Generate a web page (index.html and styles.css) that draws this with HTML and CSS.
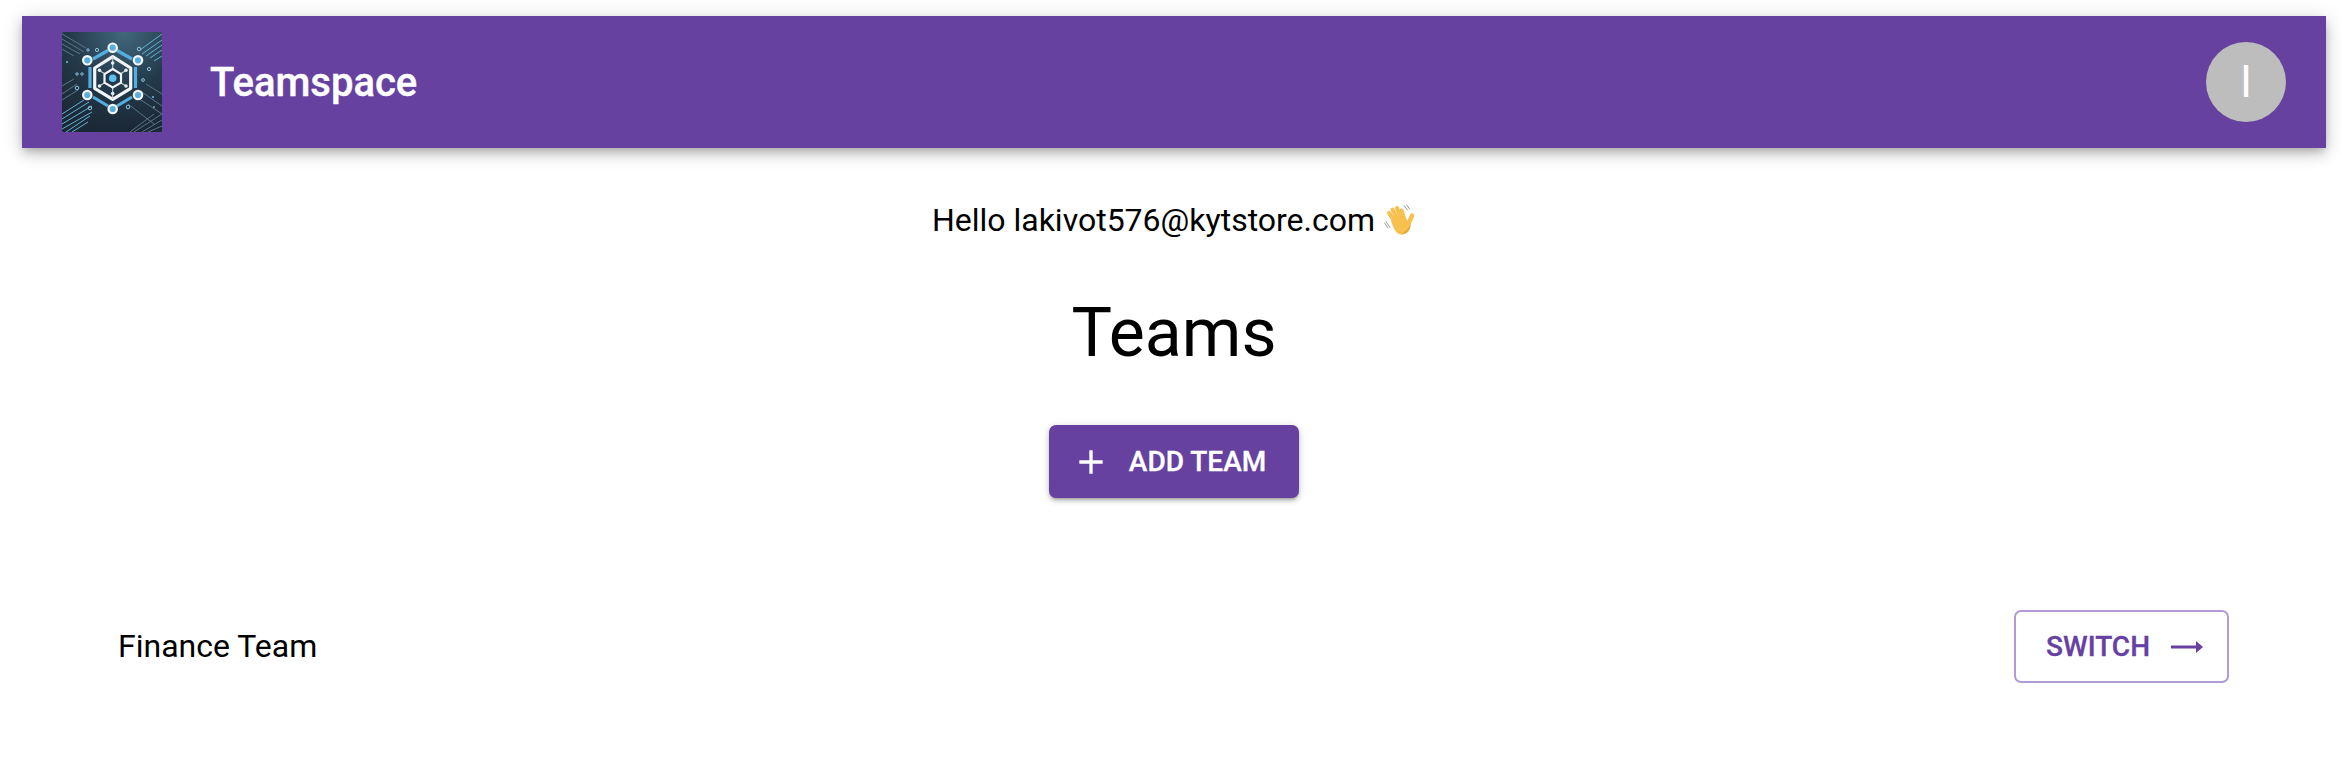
FILE: index.html
```html
<!DOCTYPE html>
<html lang="en">
<head>
<meta charset="utf-8">
<title>Teamspace</title>
<link rel="stylesheet" href="styles.css">
</head>
<body>
<div class="page">
  <header class="appbar">
    <svg class="logo" viewBox="0 0 100 100" aria-hidden="true">
      <defs>
        <radialGradient id="bg" cx="0.62" cy="0" r="1">
          <stop offset="0" stop-color="#42687c"/>
          <stop offset="0.55" stop-color="#23394a"/>
          <stop offset="1" stop-color="#1b2836"/>
        </radialGradient>
      </defs>
      <rect width="100" height="100" rx="1.5" fill="url(#bg)"/>
      <g fill="none" stroke="#587688" stroke-width="1">
        <path d="M0 2 24 16M0 7 22 20M0 12 18 22M0 17 12 24M68 100 92 82M72 100 100 82M80 100 100 88M86 100 100 94M66 72 92 92M76 66 100 82M80 60 100 74M84 52 100 62M0 54 12 47M0 62 15 52M0 68 16 58"/>
      </g>
      <g fill="none" stroke="#62b3d8" stroke-width="1">
        <path d="M78 18 100 2M80 22 100 8M84 24 100 13M88 26 100 18M92 29 100 24M0 82 22 68M0 87 27 70M0 92 30 74M0 97 30 80M4 100 28 84M10 100 26 90"/>
      </g>
      <g fill="none" stroke="#8fc4dc" stroke-width="1">
        <circle cx="26" cy="18" r="1.2"/><circle cx="35" cy="18" r="1.6"/><circle cx="77" cy="17" r="1.8"/><circle cx="87" cy="37" r="1.6"/><circle cx="15" cy="42" r="1.2"/><circle cx="20" cy="42" r="1.2"/><circle cx="15" cy="56" r="1.8"/><circle cx="81" cy="48" r="1.4"/><circle cx="28" cy="76" r="1.8"/><circle cx="66" cy="75" r="1.8"/>
      </g>
      <g fill="#6fb6d6">
        <circle cx="5" cy="30" r="1.1"/><circle cx="91" cy="65" r="1.1"/><circle cx="92" cy="75" r="0.9"/>
      </g>
      <path d="M31 27 46 18.500M55 18.500 70 27M28 35V56M73.500 35V56M31 65 46 74M55 74 70 65" fill="none" stroke="#55aee0" stroke-width="3.200"/>
      <path d="M50.700 24.700 68.700 36 68.700 56.300 50.700 67.300 32.700 56.300 32.700 36Z" fill="none" stroke="#f2f5f7" stroke-width="3.200" stroke-linejoin="round"/>
      <path d="M50.700 24.700V38M50.700 54.500V67.300M37 38.500 43.500 42M64 38.500 58 42M37 54 43.500 50.500M64 54 58 50.500" stroke="#c8d4da" stroke-width="1.100" fill="none"/>
      <path d="M50.700 37 59 42 59 50.700 50.700 55.500 42.500 50.700 42.500 42Z" fill="#22384a" stroke="#f2f5f7" stroke-width="2.200"/>
      <circle cx="50.700" cy="46.300" r="3.800" fill="#5cc0ec"/>
      <g fill="#e4ebee">
        <circle cx="50.700" cy="31" r="1.800"/><circle cx="37.500" cy="38.300" r="1.800"/><circle cx="64" cy="38.300" r="1.800"/><circle cx="37.500" cy="54" r="1.800"/><circle cx="64" cy="54" r="1.800"/><circle cx="50.700" cy="61.500" r="1.800"/>
      </g>
      <g fill="#5aaedb" stroke="#f4f7f8" stroke-width="2.200">
        <circle cx="50.700" cy="15.700" r="4.200"/><circle cx="25.300" cy="28.300" r="4.200"/><circle cx="76" cy="28.300" r="4.200"/><circle cx="25.300" cy="63" r="4.200"/><circle cx="76" cy="63" r="4.200"/><circle cx="50.700" cy="77" r="4.200"/>
      </g>
    </svg>
    <div class="brand">Teamspace</div>
    <div class="avatar">I</div>
  </header>

  <main class="hero">
    <p class="greeting">Hello lakivot576@kytstore.com
      <svg class="wave" viewBox="0 0 32 32" aria-hidden="true">
        <g fill="none" stroke="#f7c04f" stroke-linecap="round">
          <path d="M10.500 17 5 9" stroke-width="4"/>
          <path d="M13 14.500 8.500 5.500" stroke-width="4"/>
          <path d="M16.500 13.500 13 4" stroke-width="4"/>
          <path d="M20 14 17.500 6.500" stroke-width="4"/>
          <path d="M24.500 20 28 11.500" stroke-width="4.500"/>
        </g>
        <path d="M7 17C10 12 19 10 21.500 14L26.500 20C27 27 22 31 16.500 30.500 12 30 9.500 24 7 17Z" fill="#f7c04f"/>
        <path d="M16.500 30.500C21 30.500 26.500 27 26.500 20 25 24 21 28.500 16.500 30.500Z" fill="#e5a535"/>
        <g fill="none" stroke="#8e8e8e" stroke-width="0.900" stroke-linecap="round">
          <path d="M0.500 19 4 24M2 17.500 6 23.500M20 1.500 23.500 6M23 1 25.500 5"/>
        </g>
      </svg>
    </p>
    <h1 class="title">Teams</h1>
    <button class="btn btn-filled" type="button">
      <svg class="icon" viewBox="0 0 24 24" aria-hidden="true"><path d="M19 13h-6v6h-2v-6H5v-2h6V5h2v6h6v2z"/></svg>
      ADD TEAM
    </button>
  </main>

  <section class="team-row">
    <span class="team-name">Finance Team</span>
    <button class="btn btn-outline" type="button">
      SWITCH
      <svg class="arrow" viewBox="0 0 32 12" aria-hidden="true"><path d="M0 4.500h25V0l7 6-7 6V7.500H0z"/></svg>
    </button>
  </section>
</div>
</body>
</html>
```
FILE: styles.css
```css
* { box-sizing: border-box; }
html, body { margin: 0; background: #fff; }
body { font-family: Roboto, "Noto Sans", sans-serif; color: #000; }
.page { padding: 16px 16px 0 22px; }

.appbar {
  height: 132px;
  display: flex;
  align-items: center;
  padding: 0 40px;
  background: #66419f;
  color: #fff;
  box-shadow: 0 4px 8px -2px rgba(0,0,0,.2), 0 7px 14px 0 rgba(0,0,0,.14), 0 2px 20px 0 rgba(0,0,0,.12);
}
.logo { width: 100px; height: 100px; flex: none; }
.brand { margin-left: 48px; font-size: 40px; font-weight: 500; -webkit-text-stroke: .4px #fff; }
.avatar {
  margin-left: auto;
  width: 80px; height: 80px;
  border-radius: 50%;
  background: #bdbdbd;
  display: flex; align-items: center; justify-content: center;
  font-size: 44px;
}

.hero { display: flex; flex-direction: column; align-items: center; }
.greeting { margin: 50px 0 0; font-size: 32px; line-height: 44px; display: flex; align-items: center; gap: 9px; }
.wave { width: 32px; height: 32px; }
.title { margin: 49px 0 0; font-size: 68px; font-weight: 400; line-height: 84px; }
.btn {
  font-family: inherit;
  font-weight: 500;
  font-size: 28px;
  display: inline-flex; align-items: center;
  border-radius: 7px;
  cursor: pointer;
}
.btn-filled {
  margin-top: 50px;
  height: 73px;
  padding: 0 33px 0 22px;
  gap: 18px;
  border: 0;
  background: #66419f;
  color: #fff;
  -webkit-text-stroke: .3px #fff;
  box-shadow: 0 3px 3px -2px rgba(0,0,0,.25), 0 3px 5px 0 rgba(0,0,0,.16), 0 1px 9px 0 rgba(0,0,0,.12);
}
.icon { width: 40px; height: 40px; fill: #fff; }

.team-row {
  display: flex; align-items: center; justify-content: space-between;
  margin-top: 112px;
  padding: 0 97px 0 96px;
}
.team-name { font-size: 32px; margin-bottom: 2px; }
.btn-outline {
  height: 73px;
  padding: 0 24px 0 30px;
  gap: 21px;
  background: #fff;
  color: #6640a2;
  border: 2px solid #b39ad6;
  -webkit-text-stroke: .3px #6640a2;
}
.arrow { width: 32px; height: 12px; fill: #6640a2; }
```
